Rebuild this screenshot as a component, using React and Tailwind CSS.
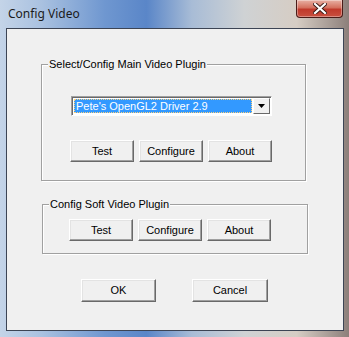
import React from 'react';

// classic raised button
function Btn({ children, w = 'w-[64px]', h = 'h-[22px]' }) {
  return (
    <button
      className={`${w} ${h} flex items-center justify-center bg-[#f0f0f0] border border-t-white border-l-white border-r-[#696969] border-b-[#696969] shadow-[inset_-1px_-1px_0_#a0a0a0,inset_1px_1px_0_#e3e3e3] text-[11px] text-black`}
    >
      {children}
    </button>
  );
}

function Group({ label, className, children }) {
  return (
    <div className={`relative border border-[#a0a0a0] shadow-[1px_1px_0_#ffffff,inset_1px_1px_0_#ffffff] ${className}`}>
      <span className="absolute left-[6px] top-[-8px] bg-[#f0f0f0] px-[1px] text-[11px] leading-[14px] text-black">
        {label}
      </span>
      {children}
    </div>
  );
}

export default function App() {
  return (
    <div
      className="w-[349px] h-[337px] flex flex-col overflow-hidden bg-[linear-gradient(90deg,#c4d4e8_0%,#a9c1e0_12%,#6f97d0_30%,#5a86c8_42%,#a8bcd6_55%,#cfd2d4_70%,#d6cdc4_85%,#8c7f7a_100%)]"
      style={{ fontFamily: '"Liberation Sans", Arial, sans-serif' }}
    >
      {/* title bar */}
      <div className="h-[28px] flex items-start justify-between pr-[6px]">
        <span className="pl-[8px] pt-[6px] text-[12px] leading-[16px] text-[#1b1b1b]" style={{ fontFamily: '"Noto Sans", "Open Sans", sans-serif' }}>
          Config Video
        </span>
        <div className="w-[47px] h-[18px] flex items-center justify-center rounded-b-[4px] border border-t-0 border-[#4a1c18] bg-[linear-gradient(180deg,#e8b0a4_0%,#d4705e_45%,#c0392b_55%,#c85040_100%)] shadow-[inset_0_0_0_1px_rgba(255,255,255,0.35)]">
          <svg width="14" height="11" viewBox="0 0 14 11">
            <path d="M2 1 L12 10 M12 1 L2 10" stroke="#3a1a16" strokeWidth="4" strokeLinecap="square" />
            <path d="M2 1 L12 10 M12 1 L2 10" stroke="#ffffff" strokeWidth="2.2" strokeLinecap="square" />
          </svg>
        </div>
      </div>

      {/* client area */}
      <div className="ml-[6px] mr-[5px] h-[303px] border border-[#3c4454] bg-[#f0f0f0] flex flex-col">
        <Group label="Select/Config Main Video Plugin" className="ml-[34px] mt-[35px] w-[265px] h-[117px]">
          <div className="ml-[29px] mt-[31px] w-[201px] h-[20px] flex border border-t-[#a0a0a0] border-l-[#a0a0a0] border-r-white border-b-white shadow-[inset_1px_1px_0_#696969] bg-white">
            <div className="flex-1 m-[2px] mr-[1px] bg-[#3399ff] outline outline-1 outline-dotted outline-[#ffd27a] -outline-offset-1 flex items-center pl-[2px] text-[11px] text-white">
              Pete's OpenGL2 Driver 2.9
            </div>
            <div className="w-[17px] my-[1px] mr-[1px] flex items-center justify-center bg-[#f0f0f0] border border-t-white border-l-white border-r-[#696969] border-b-[#696969]">
              <svg width="7" height="4" viewBox="0 0 7 4">
                <path d="M0 0 H7 L3.5 4 Z" fill="#000" />
              </svg>
            </div>
          </div>
          <div className="ml-[28px] mt-[24px] flex gap-[5px]">
            <Btn>Test</Btn>
            <Btn>Configure</Btn>
            <Btn>About</Btn>
          </div>
        </Group>

        <Group label="Config Soft Video Plugin" className="ml-[35px] mt-[23px] w-[266px] h-[50px]">
          <div className="ml-[26px] mt-[14px] flex gap-[5px]">
            <Btn>Test</Btn>
            <Btn>Configure</Btn>
            <Btn>About</Btn>
          </div>
        </Group>

        <div className="ml-[74px] mt-[25px] flex gap-[36px]">
          <Btn w="w-[75px]" h="h-[23px]">OK</Btn>
          <Btn w="w-[76px]" h="h-[23px]">Cancel</Btn>
        </div>
      </div>
    </div>
  );
}
